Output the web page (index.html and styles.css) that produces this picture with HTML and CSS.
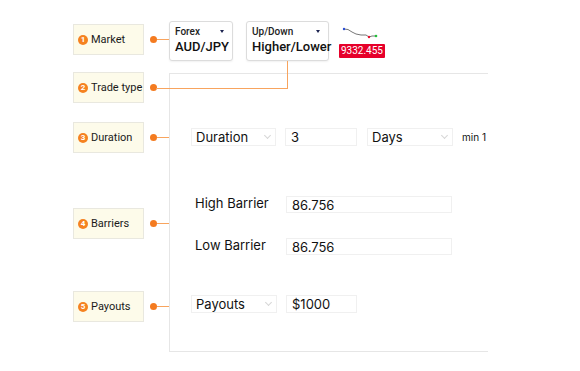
FILE: index.html
```html
<!DOCTYPE html>
<html>

<head>
    <title>Trade form guide</title>
    <link rel="stylesheet" href="styles.css">
</head>

<body>
    <div class="page">
        <div class="legend">
            <div class="tag tag-market">
                <div class="tag-box"><span class="num">1</span>Market</div>
                <span class="dot"></span>
                <span class="link"></span>
            </div>
            <div class="tag tag-type">
                <div class="tag-box"><span class="num">2</span>Trade type</div>
                <span class="dot"></span>
                <span class="elbow"></span>
            </div>
            <div class="tag tag-duration">
                <div class="tag-box"><span class="num">3</span>Duration</div>
                <span class="dot"></span>
                <span class="link"></span>
            </div>
            <div class="tag tag-barriers">
                <div class="tag-box"><span class="num">4</span>Barriers</div>
                <span class="dot"></span>
                <span class="link"></span>
            </div>
            <div class="tag tag-payouts">
                <div class="tag-box"><span class="num">5</span>Payouts</div>
                <span class="dot"></span>
                <span class="link"></span>
            </div>
        </div>

        <div class="main">
            <div class="top">
                <div class="pick pick-market">
                    <div class="pick-head">Forex<span class="caret"></span></div>
                    <div class="pick-value">AUD/JPY</div>
                </div>
                <div class="pick pick-type">
                    <div class="pick-head">Up/Down<span class="caret"></span></div>
                    <div class="pick-value">Higher/Lower</div>
                </div>
                <div class="quote">
                    <svg class="spark" width="40" height="12" viewBox="0 0 40 12">
                        <polyline points="5,2 9,2.5 13,5 17,7 22,8 27,8 30,10 33,9 37,9" fill="none" stroke="#777" stroke-width="1" />
                        <circle cx="5" cy="2" r="1.2" fill="#2a4fd6" />
                        <circle cx="30" cy="10" r="1.2" fill="#e8102e" />
                        <circle cx="37" cy="9" r="1.3" fill="#22c03a" />
                    </svg>
                    <span class="price">9332.455</span>
                </div>
            </div>

            <div class="panel">
                <div class="row row-duration">
                    <div class="field select w-85">Duration<span class="chev"></span></div>
                    <div class="field w-72">3</div>
                    <div class="field select w-86">Days<span class="chev"></span></div>
                    <span class="hint">min 1</span>
                </div>
                <div class="row row-high">
                    <span class="row-label">High Barrier</span>
                    <div class="field w-166">86.756</div>
                </div>
                <div class="row row-low">
                    <span class="row-label">Low Barrier</span>
                    <div class="field w-166">86.756</div>
                </div>
                <div class="row row-payouts">
                    <div class="field select w-86">Payouts<span class="chev"></span></div>
                    <div class="field w-71">$1000</div>
                </div>
            </div>
        </div>
    </div>
</body>

</html>
```

FILE: styles.css
```css
body {
    margin: 0;
    background: #fff;
    font-family: Roboto, "Liberation Sans", Arial, sans-serif;
    color: #1a1a1a;
}

.page {
    display: flex;
    padding-left: 73px;
    padding-top: 21px;
}

/* left column with numbered tags */
.legend {
    width: 96px;
    padding-top: 3px;
}

.tag {
    display: flex;
    align-items: center;
    position: relative;
}

.tag-type {
    margin-top: 17px;
}

.tag-duration {
    margin-top: 19px;
}

.tag-barriers {
    margin-top: 55px;
}

.tag-payouts {
    margin-top: 52px;
}

.tag-box {
    box-sizing: border-box;
    width: 71px;
    height: 31px;
    display: flex;
    align-items: center;
    padding-left: 4px;
    background: #fdfbea;
    border: 1px solid #e9e8df;
    font-size: 11px;
    color: #1a1a1a;
}

.num {
    width: 10px;
    height: 10px;
    border-radius: 50%;
    background: #f58220;
    color: #fff;
    font-size: 8px;
    font-weight: 700;
    line-height: 10px;
    text-align: center;
    margin-right: 3px;
    flex-shrink: 0;
}

.dot {
    width: 7px;
    height: 7px;
    border-radius: 50%;
    background: #f47b20;
    margin-left: 6px;
    flex-shrink: 0;
}

.link {
    flex: 1;
    height: 1.5px;
    background: #f8a45e;
}

.elbow {
    position: absolute;
    left: 83px;
    top: -11px;
    width: 132px;
    height: 28px;
    box-sizing: border-box;
    border-right: 1.5px solid #f8a45e;
    border-bottom: 1.5px solid #f8a45e;
}

/* right side */
.main {
    display: flex;
    flex-direction: column;
}

.top {
    display: flex;
    align-items: flex-start;
    height: 40px;
}

.pick {
    box-sizing: border-box;
    height: 40px;
    background: #fff;
    border: 1px solid #dcdcdc;
    border-radius: 3px;
    box-shadow: 0 1px 2px rgba(0, 0, 0, 0.06);
    padding: 4px 6px 0 5px;
}

.pick-market {
    width: 64px;
}

.pick-type {
    width: 83px;
    margin-left: 13px;
}

.pick-head {
    display: flex;
    justify-content: space-between;
    align-items: center;
    font-size: 10px;
    font-weight: 500;
    color: #222;
}

.caret {
    width: 0;
    height: 0;
    border-left: 2.5px solid transparent;
    border-right: 2.5px solid transparent;
    border-top: 3px solid #1c2350;
    margin-right: 2px;
}

.pick-value {
    margin-top: 2px;
    font-size: 13px;
    font-weight: 500;
    color: #111;
    white-space: nowrap;
}

.quote {
    display: flex;
    flex-direction: column;
    align-items: flex-start;
    margin-left: 10px;
    margin-top: 6px;
}

.spark {
    display: block;
}

.price {
    margin-top: 5px;
    background: #e6002a;
    color: #fff;
    font-size: 10px;
    line-height: 14px;
    padding: 0 2px;
    border-radius: 1px;
}

/* form panel */
.panel {
    box-sizing: border-box;
    margin-top: 12px;
    width: 319px;
    height: 279px;
    border-top: 1px solid #e6e6e6;
    border-left: 1px solid #e6e6e6;
    border-bottom: 1px solid #e6e6e6;
    padding-left: 21px;
    font-family: Inter, "Liberation Sans", Arial, sans-serif;
}

.row {
    display: flex;
    align-items: center;
}

.row-duration {
    margin-top: 54px;
}

.row-high {
    margin-top: 50px;
}

.row-low {
    margin-top: 25px;
}

.row-payouts {
    margin-top: 40px;
}

.row-label {
    box-sizing: border-box;
    width: 95px;
    padding-left: 4px;
    margin-top: -3px;
    font-size: 13px;
    line-height: 16px;
    color: #111;
}

.field {
    box-sizing: border-box;
    height: 18px;
    display: flex;
    align-items: center;
    justify-content: space-between;
    padding: 0 5px;
    background: #fff;
    border: 1px solid #f0f0f0;
    font-size: 13px;
    color: #111;
    margin-right: 9px;
}

.row-high .field,
.row-low .field {
    height: 17px;
}

.select {
    padding-left: 4px;
}

.chev {
    width: 4px;
    height: 4px;
    border-right: 1px solid #d6d6d6;
    border-bottom: 1px solid #d6d6d6;
    transform: rotate(45deg);
    margin-bottom: 3px;
}

.w-85 { width: 85px; }
.w-86 { width: 86px; }
.w-72 { width: 72px; }
.w-71 { width: 71px; }
.w-166 { width: 166px; }

.row-duration .w-72 {
    margin-right: 10px;
}

.hint {
    font-size: 10px;
    color: #111;
    white-space: nowrap;
}
```
